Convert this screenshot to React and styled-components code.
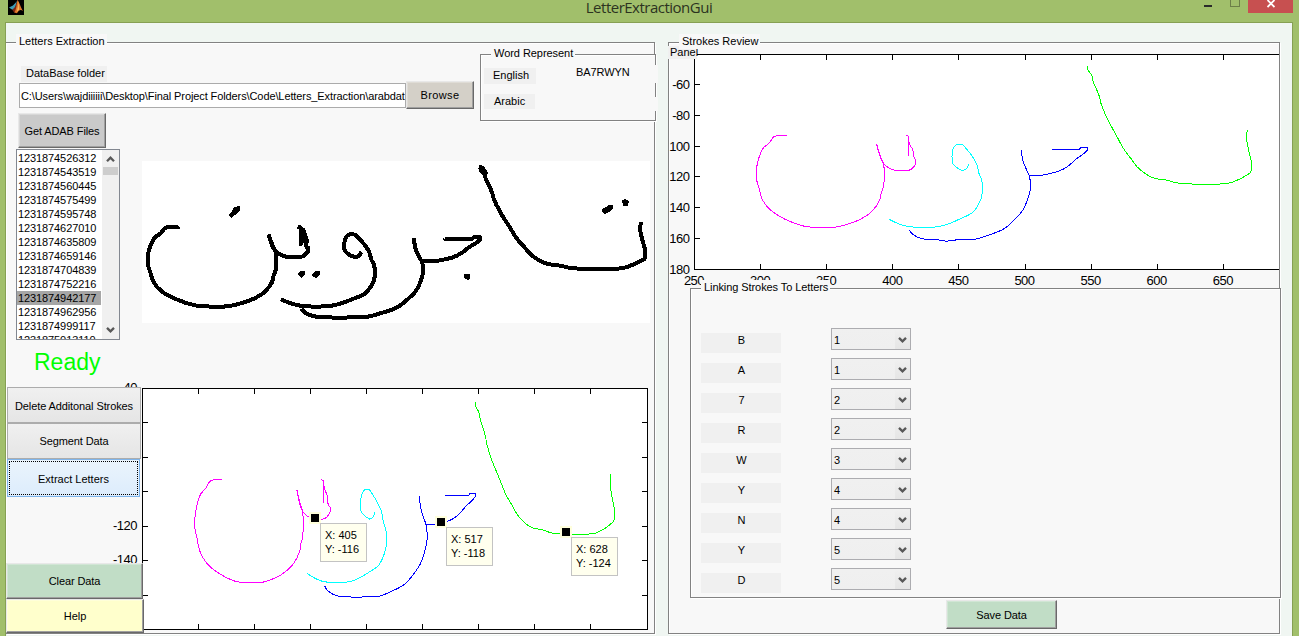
import React from "react";
import styled, { createGlobalStyle, css } from "styled-components";

const GlobalStyle = createGlobalStyle`
  * { box-sizing: border-box; }
  body {
    margin: 0;
    overflow: hidden;
    font-family: "Liberation Sans", Arial, sans-serif;
    font-size: 11px;
    color: #000;
  }
`;

const SURFACE = "#f8f8f8";

/* ---------- stroke data (x: column, y: depth) ---------- */

const STROKES = [
  {
    color: "#ff00ff",
    points: [
      [320.5, 93], [314, 93], [310, 94], [306.5, 98], [302, 101.3], [298.3, 108.7], [296.8, 115.6], [296.8, 121],
      [298.8, 127.5], [301.3, 134.7], [307, 141.2], [318.5, 147.5], [332.9, 152], [345, 152.9], [353.8, 152.9],
      [361.4, 151.8], [374, 148.1], [384, 142.5], [390.4, 134.5], [391.2, 130.8], [392.9, 126.5], [392.9, 111.3],
      [390.9, 107.4], [389.1, 102.6], [387.6, 98.7],
    ],
  },
  {
    color: "#ff00ff",
    points: [
      [409.6, 93], [411.2, 93.4], [411.9, 93.6], [411.9, 106.3], [411.9, 95], [412.4, 98.2], [415, 102.2], [416.2, 108],
      [417.4, 108.7], [417.4, 111.8], [414, 115], [410.6, 115.9], [404.2, 115.9], [399.7, 115.2], [394.2, 112.4],
      [391.7, 109.6], [389.6, 104.8], [388, 99],
    ],
  },
  {
    color: "#00ffff",
    points: [
      [457.4, 111.8], [456, 114.6], [452.9, 115.9], [448.3, 113.9], [445, 110.9], [445, 103.7], [446.3, 100.5],
      [448.3, 98.9], [452.9, 98.9], [455.9, 102], [459, 105.3], [461.8, 109], [463.5, 111.8], [465.2, 117.8],
      [467.3, 122.1], [467.3, 132.5], [464.7, 138], [460.9, 142.7], [450.8, 147.3], [442.7, 150.3], [435.2, 152.2],
      [411.7, 152.2], [404.1, 150.3], [397.1, 147.5],
    ],
  },
  {
    color: "#0000ff",
    points: [
      [520.5, 102.2], [541.1, 102.2], [542.2, 100.9], [547.3, 100.9], [547.3, 102.4], [544, 105.2], [538.3, 108.7],
      [532.7, 113], [526.4, 116], [518.9, 117.8], [512.6, 118.9], [503.2, 119], [502.5, 117.8], [498.7, 110.2],
      [497.2, 102.6], [498.7, 110.2], [502.5, 117.8], [503.3, 119.5], [504, 123.2], [504, 128.1], [502, 134.7],
      [498.3, 141.6], [492.4, 147.5], [484.1, 153.7], [472.3, 157.8], [461.4, 160.6], [449.5, 160.8], [440.2, 161.7],
      [433.7, 160.8], [423.6, 160.4], [415.5, 157.6], [412.5, 154.5],
    ],
  },
  {
    color: "#00ff00",
    points: [
      [547.1, 48.1], [547.7, 50.7], [550.4, 53.8], [551.4, 57.6], [556.2, 67.6], [557.3, 71.9], [561.8, 81.4],
      [569.4, 93.5], [574.4, 101.5], [580.7, 108.7], [584.9, 113.5], [591.5, 118.2], [598.3, 121], [605.8, 121.9],
      [615.9, 124], [629.8, 124.7], [646.1, 124.7], [655, 123.9], [663.8, 120.8], [670.9, 117.1], [671.4, 111.3],
      [669.1, 102.6], [667.6, 95], [668.1, 89.6],
    ],
  },
];

const unit = (a, b) => {
  const dx = b[0] - a[0];
  const dy = b[1] - a[1];
  const len = Math.hypot(dx, dy) || 1;
  return [dx / len, dy / len];
};

// Smooth curve through the points; sharp turns keep their corner.
const toPath = (points, sx, sy) => {
  const p = points.map(([x, y]) => [sx(x), sy(y)]);
  const tangent = (i) => {
    if (i === 0 || i === p.length - 1) return [0, 0];
    const a = unit(p[i - 1], p[i]);
    const b = unit(p[i], p[i + 1]);
    return a[0] * b[0] + a[1] * b[1] < 0.75 ? [0, 0] : unit([0, 0], [a[0] + b[0], a[1] + b[1]]);
  };
  let d = `M${p[0][0]} ${p[0][1]}`;
  for (let i = 0; i < p.length - 1; i++) {
    const [a, b] = [p[i], p[i + 1]];
    const h = Math.hypot(b[0] - a[0], b[1] - a[1]) / 3;
    const [ta, tb] = [tangent(i), tangent(i + 1)];
    const c = [a[0] + ta[0] * h, a[1] + ta[1] * h, b[0] - tb[0] * h, b[1] - tb[1] * h, b[0], b[1]];
    d += `C${c.map((v) => v.toFixed(1)).join(" ")}`;
  }
  return d;
};

/* ---------- window frame ---------- */

const Window = styled.div`
  width: 1299px;
  height: 636px;
  overflow: hidden;
  display: flex;
  flex-direction: column;
  background: #a1bf6b;
`;

const TitleBar = styled.header`
  height: 22px;
  flex: none;
  display: grid;
  grid-template-columns: 200px 1fr 200px;
  padding: 0 6px 0 8px;
`;

const Title = styled.h1`
  margin: 0;
  text-align: center;
  font: 400 15px/15px "Open Sans", "Noto Sans", sans-serif;
  letter-spacing: -0.5px;
  padding-right: 3px;
  color: #2c331f;
`;

const Controls = styled.div`
  display: flex;
  justify-content: flex-end;
`;

const CloseButton = styled.button`
  width: 45px;
  height: 13px;
  padding: 0;
  border: 0;
  background: #c75050;
  display: flex;
  justify-content: center;
`;

const Client = styled.main`
  flex: 1;
  min-height: 0;
  margin: 0 6px 0 5px;
  padding-top: 19px;
  border: solid #86a053;
  border-width: 1px 1px 0;
  background: #f0f6f2;
  display: flex;
  align-items: flex-start;
  gap: 13px;
`;

/* ---------- shared controls ---------- */

const Panel = styled.section`
  position: relative;
  flex: none;
  width: ${(p) => p.$w}px;
  height: ${(p) => p.$h}px;
  border: 1px solid #828282;
  box-shadow: 1px 1px 0 #fff, inset 1px 1px 0 #fff;
  background: ${SURFACE};
`;

const Legend = styled.h2`
  position: absolute;
  z-index: 2;
  left: ${(p) => p.$left}px;
  top: -9px;
  margin: 0;
  padding: 0 2px 1px 3px;
  font-size: 11px;
  font-weight: 400;
  line-height: 14px;
  white-space: nowrap;
  letter-spacing: ${(p) => p.$ls || 0}px;
  background: ${SURFACE};
`;

const Tag = styled.div`
  width: ${(p) => p.$w}px;
  height: ${(p) => p.$h}px;
  line-height: ${(p) => p.$h - 1}px;
  padding-left: ${(p) => p.$pad}px;
  letter-spacing: ${(p) => p.$ls || 0}px;
  white-space: nowrap;
  background: #f0f0f0;
`;

const raised = css`
  border: 1px solid;
  border-color: #e8e8e8 #696969 #696969 #e8e8e8;
  box-shadow: inset -1px -1px 0 #a0a0a0, inset 1px 1px 0 #fff4;
`;

const flat = css`
  border: 1px solid #acacac;
`;

const focused = css`
  border: 1px solid #7eb4ea;
  outline: 1px dotted #000;
  outline-offset: -3px;
`;

const looks = { raised, flat, focused };

const Button = styled.button`
  flex: none;
  width: ${(p) => p.$w}px;
  height: ${(p) => p.$h}px;
  padding: ${(p) => p.$drop || 0}px 0 0;
  font: 11px "Liberation Sans", Arial, sans-serif;
  letter-spacing: ${(p) => p.$ls || 0}px;
  white-space: nowrap;
  color: #000;
  background: ${(p) => p.$bg};
  ${(p) => looks[p.$look || "raised"]}
`;

/* ---------- letters extraction panel ---------- */

const ExtractionPanel = styled(Panel)`
  border-left: 0;
  display: flex;
  flex-direction: column;
`;

const Header = styled.div`
  height: 70px;
  flex: none;
  display: flex;
  align-items: flex-start;
  padding-left: 13px;
`;

const FolderGroup = styled.div`
  flex: none;
  width: 461px;
  padding-top: 23px;

  & > ${Tag} { margin-left: 2px; }
`;

const PathRow = styled.div`
  display: flex;
  align-items: flex-start;
  margin-top: -1px;
`;

const PathField = styled.div`
  width: 387px;
  height: 25px;
  margin-top: 2px;
  padding-left: 1px;
  border: 1px solid #ababab;
  background: #fff;
  line-height: 24px;
  white-space: nowrap;
  overflow: hidden;
  letter-spacing: -0.1px;
`;

const WordPanel = styled(Panel)`
  margin-top: 11px;
  padding: 10px 0 0 3px;
  display: grid;
  grid-template-columns: 53px 1fr;
  grid-template-rows: 29px 18px;
  align-items: start;
`;

const WordValue = styled.div`
  height: ${(p) => p.$h}px;
  margin: ${(p) => p.$top || 0}px -3px 0 25px;
  padding-left: 14px;
  line-height: 15px;
  letter-spacing: -0.1px;
  background: ${SURFACE};
`;

const WordTag = styled(Tag)`
  margin-top: ${(p) => p.$top}px;
`;

const Body = styled.div`
  flex: 1;
  display: flex;
`;

const Side = styled.div`
  position: relative;
  z-index: 1;
  width: 136px;
  flex: none;
  display: flex;
  flex-direction: column;
  align-items: flex-start;
`;

const FilesButton = styled(Button)`
  margin: 0 0 1px 12px;
`;

const ListBox = styled.div`
  width: 104px;
  height: 191px;
  flex: none;
  margin-left: 10px;
  border: 1px solid #828790;
  background: #fff;
  display: flex;
  overflow: hidden;
`;

const Files = styled.ul`
  flex: 1;
  margin: 0;
  padding: 1px 0 0;
  list-style: none;
`;

const FileItem = styled.li`
  height: 14px;
  line-height: 15px;
  padding-left: 1px;
  letter-spacing: -0.1px;
  background: ${(p) => (p.$selected ? "#a6a6a6" : "transparent")};
`;

const ScrollBar = styled.div`
  width: 17px;
  margin-left: 1px;
  padding: 5px 1px;
  background: #f0f0f0;
  display: flex;
  flex-direction: column;
  align-items: center;
`;

const Thumb = styled.div`
  width: 15px;
  height: 8px;
  margin: 4px 0 auto;
  background: #cdcdcd;
`;

const Status = styled.div`
  height: 47px;
  flex: none;
  padding-left: 28px;
  font-size: 23px;
  line-height: 45px;
  color: #00ff00;
`;

const Actions = styled.div`
  height: 176px;
  flex: none;
  padding-left: 1px;
  display: flex;
  flex-direction: column;
`;

const Main = styled.div`
  width: 508px;
  flex: none;
  padding-top: 48px;
`;

const WordImage = styled.svg`
  display: block;
  width: 508px;
  height: 162px;
  background: #fff;
`;

const PlotArea = styled.div`
  position: relative;
  margin-top: 65px;
`;

const PlotSvg = styled.svg`
  display: block;
  overflow: ${(p) => (p.$clip ? "hidden" : "visible")};
  font: 13px "Liberation Sans", Arial, sans-serif;
  letter-spacing: -0.5px;
`;

const Marker = styled.div`
  position: absolute;
  left: ${(p) => p.$x - 6}px;
  top: ${(p) => p.$y - 6}px;
  width: 12px;
  height: 12px;
  border: 2px solid #ffffdc;
  background: #000;
`;

const Tip = styled.div`
  position: absolute;
  left: ${(p) => p.$x + 5}px;
  top: ${(p) => p.$y + 5}px;
  width: 47px;
  height: 39px;
  padding: 4px 0 0 4px;
  border: 1px solid #c3c3c3;
  background: #ffffee;
  line-height: 14px;
  white-space: pre;
`;

/* ---------- strokes review panel ---------- */

const ReviewPanel = styled(Panel)`
  display: flex;
  flex-direction: column;
`;

const ReviewPlot = styled.div`
  height: 245px;
  flex: none;
`;

const Corner = styled(Tag)`
  position: absolute;
  left: -1px;
  top: 3px;
`;

const LinkPanel = styled(Panel)`
  margin-left: 21px;
  padding: 39px 0 0 10px;
`;

const LinkRow = styled.div`
  height: 30px;
  display: flex;
  align-items: flex-start;
  gap: 50px;
`;

const Letter = styled.div`
  width: 80px;
  height: 20px;
  margin-top: 5px;
  padding-left: 1px;
  line-height: 14px;
  text-align: center;
  background: #f0f0f0;
`;

const Select = styled.div`
  width: 80px;
  height: 22px;
  border: 1px solid #acacb0;
  background: linear-gradient(#f0f0f0, #efefef);
  display: flex;
  line-height: 22px;
  padding-left: 2px;
`;

const Arrow = styled.div`
  width: 15px;
  margin-left: auto;
  padding-top: 2px;
  background: linear-gradient(#f0f0f0, #e5e5e5);
  display: flex;
  align-items: center;
  justify-content: center;
`;

const SaveButton = styled(Button)`
  margin: 2px 0 0 277px;
`;

/* ---------- drawings ---------- */

const Chevron = ({ up, w = 9, h = 6 }) => (
  <svg width={w} height={h} viewBox="0 0 9 6">
    <path
      d={up ? "M1 5.2 L4.5 1.7 L8 5.2" : "M1 0.9 L4.5 4.4 L8 0.9"}
      fill="none"
      stroke="#585858"
      strokeWidth="2.3"
    />
  </svg>
);

const Logo = () => (
  <svg width="16" height="15" viewBox="0 0 16 15">
    <rect width="16" height="15" fill="#000" />
    <path d="M1 7.5 L5 5.5 L7.6 2.8 L9 1 L7 9 L4.3 9.8 Z" fill="#3d9bb5" />
    <path d="M4.3 9.8 L7 7 L9.5 0.5 L8.5 10 L6.2 12.8 Z" fill="#7a2414" />
    <path d="M9.5 0 C11 1 12.5 7.5 15.2 11.2 C13 9.5 11.2 9.5 9 13.2 L6.2 12.5 C8.5 10 8.6 4 9.5 0 Z" fill="#e0752a" />
    <path d="M9.8 1 C10.6 4 9.8 8 8.8 12 L11 9.6 C10.9 6.5 10.8 3.5 9.8 1 Z" fill="#f6bd61" />
  </svg>
);

const Strokes = ({ sx, sy, color, width = 1 }) => (
  <g fill="none" shapeRendering="crispEdges" strokeWidth={width} strokeLinejoin="round">
    {STROKES.map((s, i) => (
      <path key={i} d={toPath(s.points, sx, sy)} stroke={color || s.color} />
    ))}
  </g>
);

const imageX = (d) => 5.5 + (d - 296.6) * 1.328;
const imageY = (d) => 6 + (d - 48.3) * 1.335;
const lowerX = (d) => 0.5 + (d - 250) * 1.12;
const lowerY = (d) => 0.5 + (d - 40) * 1.7214;
const upperX = (d) => 25.5 + (d - 250) * 1.322;
const upperY = (d) => 41.5 + (d - 60) * 1.54;

const DOTS = [
  "M86 54 L90 50 L92 46 L98 45 L98 49 L93 54 L89 57 Z",
  "M156 113 L158 110 L163 110 L163 113 L159 117 Z",
  "M169 114 L173 110 L178 110 L178 114 L174 117 Z",
  "M322 113 L328 113 L328 117 L326 119 L322 117 Z",
  "M460 48 L464 46 L467 44 L471 44 L471 47 L467 51 L463 53 L460 51 Z",
  "M480 39 L483 38 L487 40 L486 45 L481 45 Z",
];

const WordDrawing = () => (
  <WordImage viewBox="0 0 508 162">
    <Strokes sx={imageX} sy={imageY} color="#000" width={4} />
    <g shapeRendering="crispEdges">
      {DOTS.map((d) => (
        <path key={d} d={d} />
      ))}
      <path d="M337 5 h5 l4 7 l-3 3 l-6 -6 Z" />
      <path d="M159 66 l4 1 l4 12 l-1 6 h-4 l-2 -12 Z" />
    </g>
  </WordImage>
);

const xTicks = [300, 350, 400, 450, 500, 550, 600, 650];
const yTicks = [60, 80, 100, 120, 140, 160];
const reviewYLabels = [[60, "-60"], [80, "-80"], [100, "100"], [120, "120"], [140, "140"], [160, "160"], [180, "180"]];

const LowerPlot = () => (
  <PlotSvg width="506" height="242">
    <rect x="0.5" y="0.5" width="505" height="241" fill="#fff" stroke="#000" shapeRendering="crispEdges" />
    <g stroke="#000" shapeRendering="crispEdges">
      {xTicks.map((t) => (
        <path key={t} d={`M${lowerX(t)} 0v6M${lowerX(t)} 236v6`} />
      ))}
      {yTicks.map((t) => (
        <path key={t} d={`M0 ${Math.floor(lowerY(t)) + 0.5}h6M500 ${Math.floor(lowerY(t)) + 0.5}h6`} />
      ))}
    </g>
    <g textAnchor="end">
      <text x="-5" y="4">-40</text>
      <text x="-5" y="142">-120</text>
      <text x="-5" y="176">-140</text>
    </g>
    <Strokes sx={lowerX} sy={lowerY} />
  </PlotSvg>
);

const UpperPlot = () => (
  <PlotSvg width="610" height="245" $clip>
    <rect x="25" y="11" width="585" height="215" fill="#fff" />
    <path d="M25.5 11v215.5M25 11.5h585M25 226.5h585" stroke="#000" shapeRendering="crispEdges" />
    <g stroke="#000" shapeRendering="crispEdges">
      {xTicks.map((t) => (
        <path key={t} d={`M${Math.floor(upperX(t)) + 0.5} 12v5M${Math.floor(upperX(t)) + 0.5} 221v5`} />
      ))}
      {yTicks.map((t) => (
        <path key={t} d={`M26 ${Math.floor(upperY(t)) + 0.5}h5`} />
      ))}
    </g>
    <g textAnchor="end">
      {reviewYLabels.map(([t, label]) => (
        <text key={t} x="20.5" y={Math.round(upperY(t) + 4.4)}>{label}</text>
      ))}
    </g>
    <g textAnchor="middle">
      {[250, ...xTicks].map((t) => (
        <text key={t} x={upperX(t) - 0.5} y="242">{t}</text>
      ))}
    </g>
    <Strokes sx={upperX} sy={upperY} />
  </PlotSvg>
);

/* ---------- data ---------- */

const FILES = [
  "1231874526312", "1231874543519", "1231874560445", "1231874575499", "1231874595748", "1231874627010",
  "1231874635809", "1231874659146", "1231874704839", "1231874752216", "1231874942177", "1231874962956",
  "1231874999117", "1231875013110",
];

const LINKS = [
  ["B", 1], ["A", 1], ["7", 2], ["R", 2], ["W", 3], ["Y", 4], ["N", 4], ["Y", 5], ["D", 5],
];

const TIPS = [
  { x: 173, y: 130, text: "X: 405\nY: -116" },
  { x: 299, y: 134, text: "X: 517\nY: -118" },
  { x: 424, y: 144, text: "X: 628\nY: -124" },
];

const GREY = "linear-gradient(#f0f0f0, #e5e5e5)";

export default function App() {
  return (
    <Window>
      <GlobalStyle />
      <TitleBar>
        <Logo />
        <Title>LetterExtractionGui</Title>
        <Controls>
          <svg width="45" height="13" shapeRendering="crispEdges">
            <rect x="1" y="5" width="8" height="2" fill="#2a2a2a" />
            <rect x="27.5" y="-1.5" width="9" height="8" fill="none" stroke="#6d7f48" />
          </svg>
          <CloseButton aria-label="Close">
            <svg width="8" height="8" viewBox="0 0 8 8">
              <path d="M0.5 0 L7.5 7 M7.5 0 L0.5 7" stroke="#fff" strokeWidth="1.8" />
            </svg>
          </CloseButton>
        </Controls>
      </TitleBar>

      <Client>
        <ExtractionPanel $w={649} $h={592}>
          <Legend $left={10}>Letters Extraction</Legend>
          <Header>
            <FolderGroup>
              <Tag $w={86} $h={16} $pad={5}>DataBase folder</Tag>
              <PathRow>
                <PathField>
                  C:\Users\wajdiiiiii\Desktop\Final Project Folders\Code\Letters_Extraction\arabdat
                </PathField>
                <Button $w={68} $h={28} $bg="#d4d0c8" $ls={0.4}>Browse</Button>
              </PathRow>
            </FolderGroup>
            <WordPanel $w={176} $h={67}>
              <Legend $left={10} $ls={-0.05}>Word Represent</Legend>
              <WordTag $w={52} $h={16} $pad={9} $top={3}>English</WordTag>
              <WordValue $h={18}>BA7RWYN</WordValue>
              <WordTag $w={51} $h={15} $pad={10} $top={0}>Arabic</WordTag>
              <WordValue $h={14} $top={3} />
            </WordPanel>
          </Header>

          <Body>
            <Side>
              <FilesButton $w={88} $h={35} $bg="#cacaca" $ls={-0.1}>Get ADAB Files</FilesButton>
              <ListBox>
                <Files>
                  {FILES.map((f) => (
                    <FileItem key={f} $selected={f === "1231874942177"}>{f}</FileItem>
                  ))}
                </Files>
                <ScrollBar>
                  <Chevron up w={9} h={8} />
                  <Thumb />
                  <Chevron w={9} h={8} />
                </ScrollBar>
              </ListBox>
              <Status>Ready</Status>
              <Actions>
                <Button $w={134} $h={36} $bg={GREY} $look="flat" $ls={-0.1} $drop={2}>Delete Additonal Strokes</Button>
                <Button $w={134} $h={36} $bg={GREY} $look="flat" $ls={-0.1}>Segment Data</Button>
                <Button $w={133} $h={38} $bg="linear-gradient(#ebf4fc, #dcecfc)" $look="focused" $drop={2}>
                  Extract Letters
                </Button>
              </Actions>
              <Button $w={137} $h={36} $bg="#c1ddc6" $ls={-0.1}>Clear Data</Button>
              <Button $w={138} $h={34} $bg="#ffffcc">Help</Button>
            </Side>

            <Main>
              <WordDrawing />
              <PlotArea>
                <LowerPlot />
                {TIPS.map((t) => (
                  <React.Fragment key={t.text}>
                    <Marker $x={t.x} $y={t.y} />
                    <Tip $x={t.x} $y={t.y}>{t.text}</Tip>
                  </React.Fragment>
                ))}
              </PlotArea>
            </Main>
          </Body>
        </ExtractionPanel>

        <ReviewPanel $w={612} $h={592}>
          <Legend $left={10}>Strokes Review</Legend>
          <Corner $w={29} $h={13} $pad={2}>Panel</Corner>
          <ReviewPlot>
            <UpperPlot />
          </ReviewPlot>
          <LinkPanel $w={591} $h={310}>
            <Legend $left={10} $ls={-0.08}>Linking Strokes To Letters</Legend>
            {LINKS.map(([letter, value], i) => (
              <LinkRow key={i}>
                <Letter>{letter}</Letter>
                <Select>
                  {value}
                  <Arrow>
                    <Chevron w={9} h={8} />
                  </Arrow>
                </Select>
              </LinkRow>
            ))}
          </LinkPanel>
          <SaveButton $w={111} $h={29} $bg="#c1ddc6" $ls={-0.1}>Save Data</SaveButton>
        </ReviewPanel>
      </Client>
    </Window>
  );
}
